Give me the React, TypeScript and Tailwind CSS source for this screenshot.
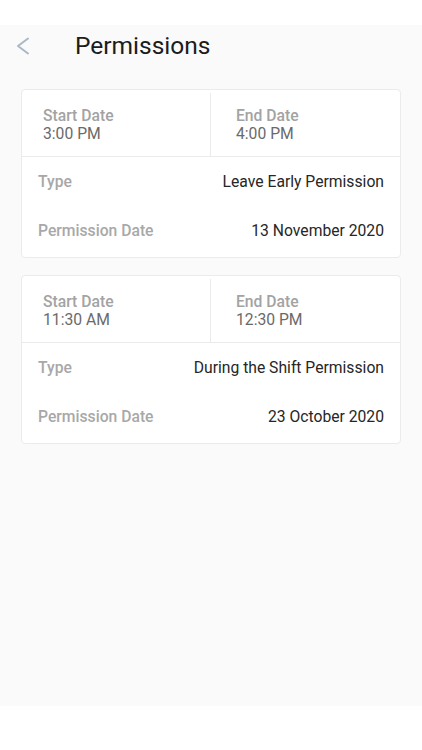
type PermissionType = {
  id: number;
  start: string;
  end: string;
  type: string;
  date: string;
};

const permissions: PermissionType[] = [
  {
    id: 1,
    start: "3:00 PM",
    end: "4:00 PM",
    type: "Leave Early Permission",
    date: "13 November 2020",
  },
  {
    id: 2,
    start: "11:30 AM",
    end: "12:30 PM",
    type: "During the Shift Permission",
    date: "23 October 2020",
  },
];

function BackArrow() {
  return (
    <svg width="14" height="18" viewBox="0 0 14 18" fill="none">
      <polyline
        points="12,1.5 2,9 12,16.5"
        stroke="#a9b8c9"
        strokeWidth="2"
        strokeLinecap="round"
        strokeLinejoin="round"
      />
    </svg>
  );
}

function PermissionCard({ item }: { item: PermissionType }) {
  return (
    <div className="bg-white border border-[#ebebeb] rounded-[4px]">
      <div className="flex h-[67px] pt-[3px] border-b border-[#ebebeb]">
        <div className="flex flex-col justify-center w-[189px] pl-[21px] border-r border-[#ebebeb]">
          <span className="text-[15.7px] leading-[18px] font-medium text-[#a3a3a3]">
            Start Date
          </span>
          <span className="text-[15.7px] leading-[18px] text-[#6a6a6a]">
            {item.start}
          </span>
        </div>
        <div className="flex flex-col justify-center flex-1 pl-[25px]">
          <span className="text-[15.7px] leading-[18px] font-medium text-[#a3a3a3]">
            End Date
          </span>
          <span className="text-[15.7px] leading-[18px] text-[#6a6a6a]">
            {item.end}
          </span>
        </div>
      </div>
      <div className="px-[16px] pb-[2px]">
        <div className="flex items-center justify-between h-[49px]">
          <span className="text-[15.7px] font-medium text-[#a8a8a8]">Type</span>
          <span className="text-[15.7px] text-[#262626]">{item.type}</span>
        </div>
        <div className="flex items-center justify-between h-[49px]">
          <span className="text-[15.7px] font-medium text-[#a8a8a8]">
            Permission Date
          </span>
          <span className="text-[15.7px] text-[#262626]">{item.date}</span>
        </div>
      </div>
    </div>
  );
}

export default function App() {
  return (
    <div
      className="flex flex-col w-[422px] h-[750px] bg-white"
      style={{ fontFamily: "Roboto, 'Noto Sans', sans-serif" }}
    >
      <div className="h-[25px] bg-white" />
      <div className="flex-1 bg-[#fafafa]">
        <div className="flex items-center h-[42px] pl-[16px]">
          <BackArrow />
          <h1 className="ml-[45px] text-[24.5px] leading-[28px] text-[#1c1c1c]">
            Permissions
          </h1>
        </div>
        <div className="flex flex-col gap-[17px] px-[21px] pt-[22px]">
          {permissions.map((p) => (
            <PermissionCard key={p.id} item={p} />
          ))}
        </div>
      </div>
      <div className="h-[44px] bg-white" />
    </div>
  );
}
